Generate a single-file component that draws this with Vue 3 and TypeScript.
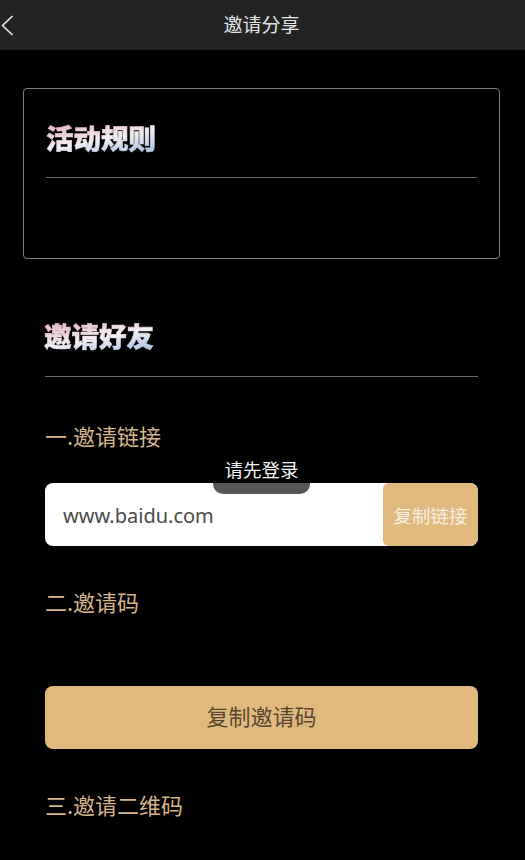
<script setup lang="ts">
const linkUrl: string = 'www.baidu.com'
</script>

<template>
  <div class="page">
    <header class="nav">
      <svg class="back" width="14" height="24" viewBox="0 0 14 24" fill="none">
        <path d="M12.5 3 L2.5 12.5 L12.5 22" stroke="#e8e8e8" stroke-width="1.6" />
      </svg>
      <span class="nav-title">邀请分享</span>
    </header>

    <section class="rules">
      <h2 class="fancy">活动规则</h2>
      <div class="rule-line"></div>
    </section>

    <section class="invite">
      <h2 class="fancy">邀请好友</h2>
      <div class="invite-line"></div>

      <div class="label first">一.邀请链接</div>
      <div class="link-row">
        <span class="url">{{ linkUrl }}</span>
        <button class="copy-link">复制链接</button>
      </div>

      <div class="label second">二.邀请码</div>
      <button class="copy-code">复制邀请码</button>

      <div class="label third">三.邀请二维码</div>
    </section>

    <div class="toast">请先登录</div>
  </div>
</template>

<style>
html, body { margin: 0; background: #000; }
</style>

<style scoped>
.page {
  position: relative;
  width: 525px;
  height: 860px;
  overflow: hidden;
  background: #000;
  font-family: "Noto Sans CJK SC", "Noto Sans", sans-serif;
}
.nav {
  position: relative;
  height: 50px;
  background: #222424;
  display: flex;
  align-items: center;
  justify-content: center;
}
.back { position: absolute; left: 0; top: 13px; }
.nav-title { color: #e6e6e6; font-size: 19px; line-height: 47px; height: 47px; margin: 0 2px 3px 0; }
.rules {
  box-sizing: border-box;
  width: 477px;
  height: 171px;
  margin: 38px 0 0 23px;
  padding: 30px 22px 0;
  border: 1px solid #808080;
  border-radius: 4px;
}
.fancy {
  margin: 0;
  height: 36px;
  font-size: 27.5px;
  line-height: 36px;
  font-weight: 900;
  letter-spacing: 0;
  width: max-content;
  background: linear-gradient(170deg, #e8a9bb 0%, #eccbd6 30%, #f2eef2 55%, #c8d4ea 78%, #9dbbdd 100%);
  -webkit-background-clip: text;
  background-clip: text;
  color: transparent;
  -webkit-text-stroke: 0.6px transparent;
}
.rule-line { height: 1px; margin-top: 22px; width: 431px; background: #666; }
.invite { padding: 0 47px 0 45px; margin-top: 58px; }
.invite .fancy { margin-left: -1px; }
.invite-line { height: 1px; margin-top: 23px; background: #6a6a6a; }
.label { color: #d4b48a; font-size: 22px; line-height: 30px; }
.first { margin-top: 43px; }
.link-row {
  display: flex;
  align-items: stretch;
  justify-content: space-between;
  height: 63px;
  margin-top: 33px;
  background: #fff;
  border-radius: 8px;
  overflow: hidden;
}
.url { color: #4a4a4a; font-size: 20px; line-height: 65px; padding-left: 18px; font-family: "Noto Sans", sans-serif; }
.copy-link {
  width: 95px;
  border: 0;
  padding: 0;
  background: #e1b97f;
  color: #f6eee0;
  font: inherit;
  font-size: 18.5px;
  border-radius: 6px 0 0 6px;
}
.second { margin-top: 40px; }
.copy-code {
  display: block;
  box-sizing: border-box;
  width: 100%;
  height: 63px;
  margin-top: 70px;
  padding: 0 0 5px;
  border: 0;
  background: #e1b97f;
  color: #5a4630;
  font: inherit;
  font-size: 22px;
  border-radius: 8px;
}
.third { margin-top: 40px; }
.toast {
  position: absolute;
  left: 213px;
  top: 447px;
  box-sizing: border-box;
  width: 97px;
  height: 47px;
  border-radius: 10px;
  background: rgba(0, 0, 0, 0.66);
  color: #f2f2f2;
  font-size: 18.5px;
  line-height: 44px;
  text-align: center;
}
</style>
